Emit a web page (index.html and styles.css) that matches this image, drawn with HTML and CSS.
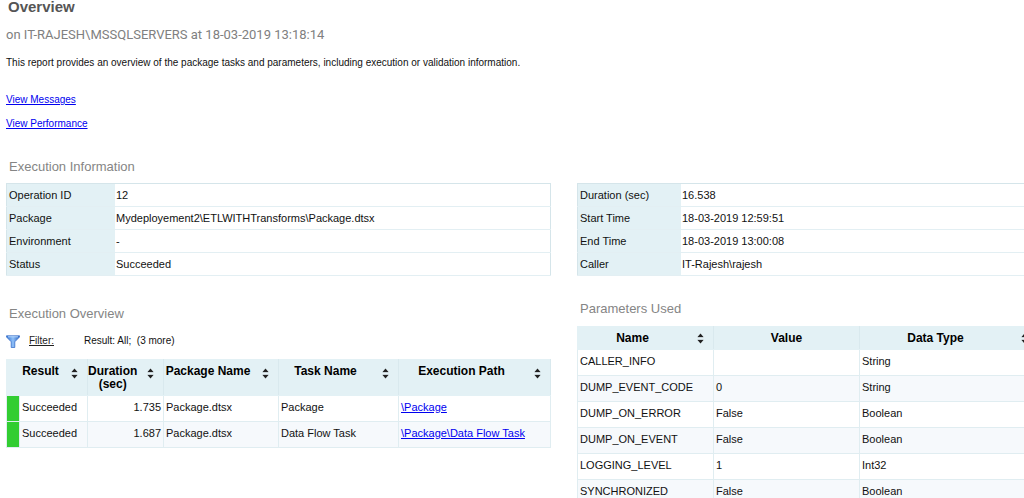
FILE: index.html
```html
<!DOCTYPE html>
<html lang="en">
<head>
<meta charset="utf-8"/>
<title>Overview</title>
<link rel="stylesheet" href="styles.css">
</head>
<body>
<svg width="0" height="0" class="defs" aria-hidden="true">
  <symbol id="sort" viewBox="0 0 7 11">
    <path d="M3.5 0.5 L6.5 4 H0.5 Z M3.5 10.5 L6.5 7 H0.5 Z" fill="#222"/>
    <path d="M0.5 4.5 H6.5 M0.5 6.5 H6.5" stroke="#b5bfc4" stroke-width="0.6"/>
  </symbol>
</svg>
<header>
  <h1>Overview</h1>
  <p class="server">on IT-RAJESH\MSSQLSERVERS at 18-03-2019 13:18:14</p>
  <p class="about">This report provides an overview of the package tasks and parameters, including execution or validation information.</p>
  <nav>
    <a href="#messages">View Messages</a>
    <a href="#performance">View Performance</a>
  </nav>
</header>
<h2>Execution Information</h2>
<main>
  <section>
    <table class="info">
      <tr><th scope="row">Operation ID</th><td>12</td></tr>
      <tr><th scope="row">Package</th><td>Mydeployement2\ETLWITHTransforms\Package.dtsx</td></tr>
      <tr><th scope="row">Environment</th><td>-</td></tr>
      <tr><th scope="row">Status</th><td>Succeeded</td></tr>
    </table>
    <h2 class="overview-title">Execution Overview</h2>
    <div class="filter">
      <svg width="14" height="13" viewBox="0 0 14 13" aria-hidden="true">
        <defs>
          <linearGradient id="funnel"><stop offset="0" stop-color="#2f6fd0"/><stop offset="0.5" stop-color="#8fc0f8"/><stop offset="1" stop-color="#2a62c0"/></linearGradient>
        </defs>
        <path d="M0.5 0.8 H13.5 V2 L8.8 6.8 V12.5 H5.2 V6.8 L0.5 2 Z" fill="url(#funnel)" stroke="#3f74cc" stroke-width="0.8"/>
        <path d="M2 1.8 H12" stroke="#bcdcff" stroke-width="0.9"/>
      </svg>
      <a href="#filter">Filter:</a>
      <span>Result: All;&nbsp; (3 more)</span>
    </div>
    <table class="grid tasks">
      <colgroup><col class="c-flag"><col class="c-result"><col class="c-duration"><col class="c-package"><col class="c-task"><col></colgroup>
      <thead>
        <tr>
          <td class="blank"></td>
          <th scope="col"><div><span>Result</span><button aria-label="Sort by result"><svg><use href="#sort"/></svg></button></div></th>
          <th scope="col"><div><span>Duration (sec)</span><button aria-label="Sort by duration"><svg><use href="#sort"/></svg></button></div></th>
          <th scope="col"><div><span>Package Name</span><button aria-label="Sort by package name"><svg><use href="#sort"/></svg></button></div></th>
          <th scope="col"><div><span>Task Name</span><button aria-label="Sort by task name"><svg><use href="#sort"/></svg></button></div></th>
          <th scope="col"><div><span>Execution Path</span><button aria-label="Sort by execution path"><svg><use href="#sort"/></svg></button></div></th>
        </tr>
      </thead>
      <tbody>
        <tr><td class="flag"></td><td>Succeeded</td><td class="num">1.735</td><td>Package.dtsx</td><td>Package</td><td><a href="#package">\Package</a></td></tr>
        <tr><td class="flag"></td><td>Succeeded</td><td class="num">1.687</td><td>Package.dtsx</td><td>Data Flow Task</td><td><a href="#dataflow">\Package\Data Flow Task</a></td></tr>
      </tbody>
    </table>
  </section>
  <section>
    <table class="info wide">
      <tr><th scope="row">Duration (sec)</th><td>16.538</td></tr>
      <tr><th scope="row">Start Time</th><td>18-03-2019 12:59:51</td></tr>
      <tr><th scope="row">End Time</th><td>18-03-2019 13:00:08</td></tr>
      <tr><th scope="row">Caller</th><td>IT-Rajesh\rajesh</td></tr>
    </table>
    <h2 class="params-title">Parameters Used</h2>
    <table class="grid params wide">
      <colgroup><col class="c-name"><col class="c-value"><col></colgroup>
      <thead>
        <tr>
          <th scope="col"><div><span>Name</span><button aria-label="Sort by name"><svg><use href="#sort"/></svg></button></div></th>
          <th scope="col"><div><span>Value</span></div></th>
          <th scope="col"><div><span>Data Type</span><button aria-label="Sort by data type"><svg><use href="#sort"/></svg></button></div></th>
        </tr>
      </thead>
      <tbody>
        <tr><td>CALLER_INFO</td><td></td><td>String</td></tr>
        <tr><td>DUMP_EVENT_CODE</td><td>0</td><td>String</td></tr>
        <tr><td>DUMP_ON_ERROR</td><td>False</td><td>Boolean</td></tr>
        <tr><td>DUMP_ON_EVENT</td><td>False</td><td>Boolean</td></tr>
        <tr><td>LOGGING_LEVEL</td><td>1</td><td>Int32</td></tr>
        <tr><td>SYNCHRONIZED</td><td>False</td><td>Boolean</td></tr>
      </tbody>
    </table>
  </section>
</main>
</body>
</html>
```
FILE: styles.css
```css
html {
  overflow: hidden;
}
body {
  margin: 0;
  padding-left: 6px;
  font-family: "Liberation Sans", Arial, sans-serif;
  font-size: 11px;
  line-height: 14px;
  color: #111;
  background: white;
}
.defs {
  display: block;
}
h1 {
  margin: 0;
  padding-left: 2px;
  font-size: 15px;
  line-height: 14px;
  color: #555;
}
p {
  margin: 0;
}
.server {
  margin-top: 12px;
  font-family: Roboto, sans-serif;
  font-size: 13px;
  line-height: 18px;
  color: #808080;
}
.about {
  margin-top: 12px;
}
.about, nav, .filter {
  font-size: 10px;
}
a {
  color: #0000f0;
}
nav {
  display: flex;
  flex-direction: column;
  align-items: flex-start;
  gap: 10px;
  margin-top: 23px;
}
h2 {
  margin: 0;
  padding-left: 3px;
  font-size: 13px;
  line-height: 18px;
  font-weight: normal;
  color: #858585;
}
header + h2 {
  margin: 27px 0 7px;
}
main {
  display: grid;
  grid-template-columns: 545fr 447fr;
  column-gap: 26px;
}
section {
  min-width: 0;
}
table {
  width: 100%;
  border-collapse: collapse;
  table-layout: fixed;
  border: 1px solid #d5e5ea;
}
/* right hand tables run past the edge of the viewer */
.wide {
  width: calc(100% + 14px);
}
.info th {
  width: 104px;
  background: #e3f1f5;
  font-weight: normal;
  text-align: left;
}
.wide.info th {
  width: 99px;
}
.info th, .info td {
  height: 21px;
  padding: 0 2px 1px 1px;
  border-bottom: 1px solid #e3eff3;
}
.info th {
  padding-left: 2px;
}
.overview-title {
  margin-top: 29px;
}
.params-title {
  margin: 24px 0 8px;
}
.filter {
  display: flex;
  align-items: center;
  margin: 11px 0;
}
.filter a {
  margin: 0 30px 0 9px;
  color: #222;
}
.grid th, .grid td {
  padding: 0 2px;
  border: 1px solid #e0edf1;
}
.grid thead th {
  padding: 0;
  border-color: #e3f1f5;
  border-right-color: #d9e9ee;
  background: #e3f1f5;
  font-size: 12px;
  line-height: 13px;
  vertical-align: top;
  color: #000;
}
.grid tbody td {
  height: 22px;
  padding-bottom: 3px;
}
.grid tbody tr:nth-child(even) {
  background: #f6f9fc;
}
.grid th div {
  display: flex;
}
.grid th span {
  flex: 1;
  padding-top: 5px;
}
.grid th button {
  display: flex;
  justify-content: center;
  width: 26px;
  padding: 8px 0 0;
  border: 0;
  background: none;
}
.grid button svg {
  width: 7px;
  height: 11px;
}
.tasks thead tr {
  height: 36px;
}
.tasks .blank {
  background: #e3f1f5;
  border-color: #e3f1f5;
}
.tasks .flag {
  background: #32cd32;
}
.tasks .num {
  text-align: right;
}
.c-flag { width: 13px; }
.c-result { width: 68px; }
.c-duration { width: 76px; }
.c-package { width: 115px; }
.c-task { width: 120px; }
.c-name { width: 136px; }
.c-value { width: 146px; }
.params thead tr {
  height: 23px;
}
.params th button {
  padding-top: 6px;
}
```
